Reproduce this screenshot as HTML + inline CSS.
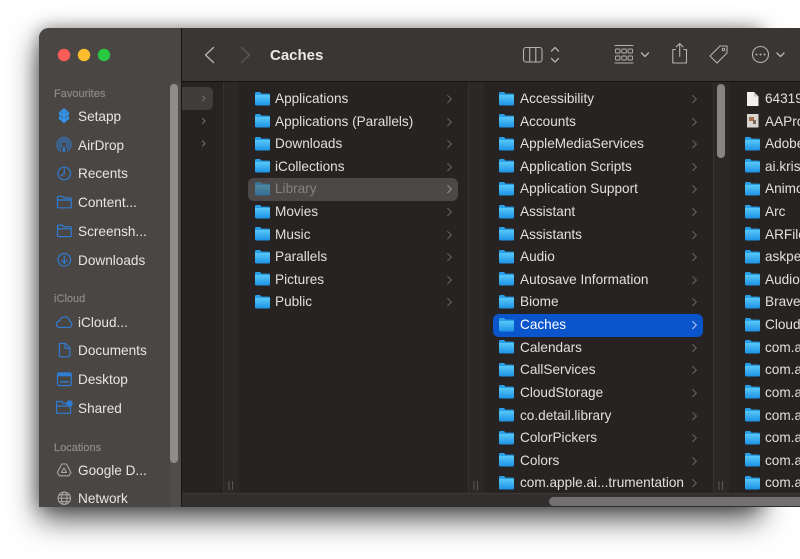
<!DOCTYPE html>
<html><head><meta charset="utf-8"><title>Finder</title>
<style>
html,body{margin:0;padding:0;background:#fff}
#root{position:relative;width:800px;height:559px;overflow:hidden;background:#fff;font-family:"Liberation Sans",sans-serif;filter:blur(.35px)}
#shadow{position:absolute;left:39px;top:28px;width:722px;height:479px;box-shadow:0 12px 30px rgba(0,0,0,.68),0 0 16px rgba(0,0,0,.32);border-radius:10px 0 0 0}
#win{position:absolute;left:39px;top:28px;width:761px;height:479px;overflow:hidden;background:#262322;border-top-left-radius:10px}
.a{position:absolute}
#side{left:0;top:0;width:142px;height:479px;background:#4a4644;border-right:1px solid #161414}
#bar{left:143px;top:0;width:618px;height:53px;background:#3a3634;border-bottom:1px solid #141212}
.g{position:absolute;top:54px;width:15px;height:411px;background:#2b2827;border-left:1px solid #353231}
#hb{left:143px;top:465px;width:618px;height:14px;background:#312e2d;border-top:1px solid #3c3938}
.sl{position:absolute;left:54px;font-size:11px;font-weight:400;color:#8d8987;line-height:14px;white-space:nowrap;margin-top:.5px;-webkit-text-stroke:.2px #8d8987}
.si{position:absolute;left:78px;font-size:13.6px;color:#e8e5e3;line-height:18px;white-space:nowrap;margin-top:1px}
.col{position:absolute;top:87px}
.r{position:relative;height:22.62px;line-height:22.62px;font-size:13.6px;color:#e2dfdd;white-space:nowrap}
.r svg{position:absolute;left:0;top:4.500px;width:15px;height:14px}
.r span{position:absolute;left:20px;top:1px}
.r i{position:absolute;top:9px;width:4.500px;height:4.500px;border-top:1px solid #686462;border-right:1px solid #686462;transform:rotate(45deg)}
.c1 .r i{left:190px}.c2 .r i{left:191px}
</style></head>
<body><div id="root">
<div id="shadow"></div>
<div id="win">
<div class="a" id="side"></div>
<div class="a" id="bar"></div>
<div class="a" style="left:131px;top:54px;width:11px;height:425px;background:#504c4a"></div>
<div class="g" style="left:184px"></div>
<div class="g" style="left:429px"></div>
<div class="g" style="left:674px"></div>
<div class="a" id="hb"></div>
<div class="a" style="left:143px;top:59px;width:31px;height:23px;background:#403d3c;border-radius:0 5px 5px 0"></div>
<div class="a" style="left:209px;top:150px;width:210px;height:22.5px;background:#4b4847;border-radius:6px"></div>
<div class="a" style="left:454px;top:286px;width:210px;height:22.5px;background:#0a55cc;border-radius:6px"></div>
<div class="a" style="left:131px;top:56px;width:8px;height:379px;background:#8f8c8a;border-radius:4px"></div>
<div class="a" style="left:678px;top:56px;width:8px;height:74px;background:#878483;border-radius:4px"></div>
<div class="a" style="left:510px;top:469px;width:260px;height:9px;background:#727070;border-radius:5px 0 0 5px"></div>
</div>

<div class="sl" style="top:86px">Favourites</div>
<div class="si" style="top:106.500px">Setapp</div>
<div class="si" style="top:135.500px">AirDrop</div>
<div class="si" style="top:164px">Recents</div>
<div class="si" style="top:193px">Content...</div>
<div class="si" style="top:221.500px">Screensh...</div>
<div class="si" style="top:250.500px">Downloads</div>
<div class="sl" style="top:291px">iCloud</div>
<div class="si" style="top:312.500px">iCloud...</div>
<div class="si" style="top:341px">Documents</div>
<div class="si" style="top:370px">Desktop</div>
<div class="si" style="top:398.500px">Shared</div>
<div class="sl" style="top:440px">Locations</div>
<div class="si" style="top:460.500px">Google D...</div>
<div class="si" style="top:489px">Network</div>

<div class="a" style="left:270px;top:46px;font-size:15px;font-weight:700;color:#ebe8e6;line-height:19px">Caches</div>

<svg width="0" height="0" style="position:absolute"><defs>
<linearGradient id="fg" x1="0" y1="0" x2="0" y2="1"><stop offset="0" stop-color="#58c8f8"/><stop offset="1" stop-color="#1c92e4"/></linearGradient>
<symbol id="f" viewBox="0 0 15 14"><path d="M0 3.500V1.300C0 .6 .5 0 1.200 0H5L6.500 1.600H13.800C14.500 1.600 15 2.200 15 3V3.500Z" fill="#2a9fe8"/><path d="M0 3H15V12.300C15 13 14.500 13.500 13.800 13.500H1.200C.5 13.500 0 13 0 12.300Z" fill="url(#fg)"/></symbol>
</defs></svg>

<div class="col c1" style="left:255px;width:205px;top:87px">
<div class="r"><svg><use href="#f"/></svg><span>Applications</span><i></i></div>
<div class="r"><svg><use href="#f"/></svg><span>Applications (Parallels)</span><i></i></div>
<div class="r"><svg><use href="#f"/></svg><span>Downloads</span><i></i></div>
<div class="r"><svg><use href="#f"/></svg><span>iCollections</span><i></i></div>
<div class="r"><svg style="opacity:.5"><use href="#f"/></svg><span style="color:#87827f">Library</span><i style="border-color:#989492"></i></div>
<div class="r"><svg><use href="#f"/></svg><span>Movies</span><i></i></div>
<div class="r"><svg><use href="#f"/></svg><span>Music</span><i></i></div>
<div class="r"><svg><use href="#f"/></svg><span>Parallels</span><i></i></div>
<div class="r"><svg><use href="#f"/></svg><span>Pictures</span><i></i></div>
<div class="r"><svg><use href="#f"/></svg><span>Public</span><i></i></div>
</div>

<div class="col c2" style="left:499px;width:205px;top:87px">
<div class="r"><svg><use href="#f"/></svg><span style="left:21px">Accessibility</span><i></i></div>
<div class="r"><svg><use href="#f"/></svg><span style="left:21px">Accounts</span><i></i></div>
<div class="r"><svg><use href="#f"/></svg><span style="left:21px">AppleMediaServices</span><i></i></div>
<div class="r"><svg><use href="#f"/></svg><span style="left:21px">Application Scripts</span><i></i></div>
<div class="r"><svg><use href="#f"/></svg><span style="left:21px">Application Support</span><i></i></div>
<div class="r"><svg><use href="#f"/></svg><span style="left:21px">Assistant</span><i></i></div>
<div class="r"><svg><use href="#f"/></svg><span style="left:21px">Assistants</span><i></i></div>
<div class="r"><svg><use href="#f"/></svg><span style="left:21px">Audio</span><i></i></div>
<div class="r"><svg><use href="#f"/></svg><span style="left:21px">Autosave Information</span><i></i></div>
<div class="r"><svg><use href="#f"/></svg><span style="left:21px">Biome</span><i></i></div>
<div class="r"><svg><use href="#f"/></svg><span style="left:21px;color:#fff">Caches</span><i style="border-color:#b9cdf0"></i></div>
<div class="r"><svg><use href="#f"/></svg><span style="left:21px">Calendars</span><i></i></div>
<div class="r"><svg><use href="#f"/></svg><span style="left:21px">CallServices</span><i></i></div>
<div class="r"><svg><use href="#f"/></svg><span style="left:21px">CloudStorage</span><i></i></div>
<div class="r"><svg><use href="#f"/></svg><span style="left:21px">co.detail.library</span><i></i></div>
<div class="r"><svg><use href="#f"/></svg><span style="left:21px">ColorPickers</span><i></i></div>
<div class="r"><svg><use href="#f"/></svg><span style="left:21px">Colors</span><i></i></div>
<div class="r"><svg><use href="#f"/></svg><span style="left:21px">com.apple.ai...trumentation</span><i></i></div>
</div>

<div class="col c3" style="left:745px;width:55px;overflow:hidden;top:87px;height:405px">
<div class="r"><svg viewBox="0 0 15 14"><path d="M2 0H9L13.500 4.500V14H2Z" fill="#f1f0ef"/><path d="M9 0V4.500H13.500Z" fill="#c9c7c5"/></svg><span>64319</span></div>
<div class="r"><svg viewBox="0 0 15 14"><rect x="2" y="0" width="11.500" height="13.500" fill="#d8d4cf"/><rect x="4" y="3" width="5" height="4" fill="#a5704e"/><rect x="8" y="6" width="3" height="4" fill="#7b6a60"/></svg><span>AAPro</span></div>
<div class="r"><svg><use href="#f"/></svg><span>Adobe</span></div>
<div class="r"><svg><use href="#f"/></svg><span>ai.kris</span></div>
<div class="r"><svg><use href="#f"/></svg><span>Animo</span></div>
<div class="r"><svg><use href="#f"/></svg><span>Arc</span></div>
<div class="r"><svg><use href="#f"/></svg><span>ARFile</span></div>
<div class="r"><svg><use href="#f"/></svg><span>askpe</span></div>
<div class="r"><svg><use href="#f"/></svg><span>Audio</span></div>
<div class="r"><svg><use href="#f"/></svg><span>Brave</span></div>
<div class="r"><svg><use href="#f"/></svg><span>Cloud</span></div>
<div class="r"><svg><use href="#f"/></svg><span>com.a</span></div>
<div class="r"><svg><use href="#f"/></svg><span>com.a</span></div>
<div class="r"><svg><use href="#f"/></svg><span>com.a</span></div>
<div class="r"><svg><use href="#f"/></svg><span>com.a</span></div>
<div class="r"><svg><use href="#f"/></svg><span>com.a</span></div>
<div class="r"><svg><use href="#f"/></svg><span>com.a</span></div>
<div class="r"><svg><use href="#f"/></svg><span>com.a</span></div>
</div>

<svg class="a" style="left:0;top:0" width="800" height="559" viewBox="0 0 800 559" fill="none">
<circle cx="64" cy="55" r="6.200" fill="#fc5c57"/><circle cx="84" cy="55" r="6.200" fill="#fdbc2e"/><circle cx="104" cy="55" r="6.200" fill="#28c840"/>

<g stroke="#b5b2b0" stroke-width="1.400" stroke-linecap="round" stroke-linejoin="round">
<path d="M213.500 47.500L205.500 55L213.500 62.500"/>
<path d="M241.500 47.500L249.500 55L241.500 62.500" stroke="#5a5755"/>
<rect x="523.500" y="47.500" width="18.500" height="14.500" rx="2.500" stroke-width="1.100"/>
<path d="M529.700 47.500V62M535.800 47.500V62" stroke-width="1.100"/>
<path d="M551.500 51L555 47.500L558.500 51M551.500 58.500L555 62L558.500 58.500" stroke-width="1.300"/>
<path d="M615 45.500H633M615 63H633" stroke-width="1"/>
<rect x="615.500" y="49" width="4.500" height="4" rx=".8" stroke-width=".9"/><rect x="621.800" y="49" width="4.500" height="4" rx=".8" stroke-width=".9"/><rect x="628" y="49" width="4.500" height="4" rx=".8" stroke-width=".9"/>
<rect x="615.500" y="56" width="4.500" height="4" rx=".8" stroke-width=".9"/><rect x="621.800" y="56" width="4.500" height="4" rx=".8" stroke-width=".9"/><rect x="628" y="56" width="4.500" height="4" rx=".8" stroke-width=".9"/>
<path d="M641.500 53L645 56.500L648.500 53" stroke-width="1.400"/>
<path d="M675.500 49.500H672.800V63H686.500V49.500H683.800" stroke-width="1.100"/>
<path d="M679.700 56.500V43.800M676.300 46.800L679.700 43.500L683 46.800" stroke-width="1.100"/>
<path d="M710 56.500L720 46.500H727V53.500L717 63.500Z" stroke-width="1.100" transform="translate(0 -.5)"/>
<circle cx="723.500" cy="49.500" r="1.200" stroke-width="1"/>
<circle cx="760.500" cy="54.500" r="8" stroke-width="1.100"/>
<path d="M777 53L780.500 56.500L784 53" stroke-width="1.400"/>
</g>
<g fill="#b5b2b0"><circle cx="756.500" cy="54.500" r="1"/><circle cx="760.500" cy="54.500" r="1"/><circle cx="764.500" cy="54.500" r="1"/></g>

<g stroke="#74716f" stroke-width="1" stroke-linecap="round" stroke-linejoin="round">
<path d="M202.500 96L205 98.500L202.500 101M202.500 118.500L205 121L202.500 123.500M202.500 141L205 143.500L202.500 146"/>
</g>
<g stroke="#5c5957" stroke-width="1"><path d="M229 481V490M232.500 481V490M474 481V490M477.500 481V490M719 481V490M722.500 481V490"/></g>

<g fill="#3591e6">
<path d="M64 108L67.500 111L64 114L60.500 111Z"/><path d="M64 112.500L67.500 115.500L64 118.500L60.500 115.500Z" transform="translate(0 -.3)"/><path d="M64 117L67.500 120L64 123.500L60.500 120Z"/>
<path d="M60 111L62.800 113.500L60 116L58.500 113.500Z"/><path d="M68 111L69.500 113.500L68 116L65.200 113.500Z"/>
<path d="M60 115.500L62.800 118L60 120.500L58.500 118Z"/><path d="M68 115.500L69.500 118L68 120.500L65.200 118Z"/>
</g>
<g stroke="#2f7cd2" stroke-width="1.200" stroke-linecap="round" stroke-linejoin="round">
<path d="M60.500 151C57.500 149.500 57 146.800 57 144.500A7 7 0 0 1 71 144.500C71 146.800 70 149.500 67.500 151" stroke-width="1"/>
<path d="M61 148.500C59.500 147.500 59 146 59 144.500A5 5 0 0 1 69 144.500C69 146 68.500 147.500 67 148.500" stroke-width="1"/>
<path d="M62 146.500C61.300 146 61 145.200 61 144.500A3 3 0 0 1 67 144.500C67 145.200 66.700 146 66 146.500" stroke-width="1"/>
<path d="M62.800 151.500L64 146L65.200 151.500Z" fill="#2f7cd2" stroke-width=".6"/>
<circle cx="64.200" cy="173.500" r="6.300"/><path d="M64.300 169V173.800L61 175.500"/>
<path d="M57.500 199.500V197.500C57.500 196.800 58 196.300 58.700 196.300H62.500L64 198H70C70.800 198 71.300 198.500 71.300 199.200V206.500C71.300 207.300 70.800 207.800 70 207.800H58.700C58 207.800 57.500 207.300 57.500 206.500ZM57.500 200H71.300"/>
<path d="M57.500 228.300V226.300C57.500 225.600 58 225.100 58.700 225.100H62.500L64 226.800H70C70.800 226.800 71.300 227.300 71.300 228V235.300C71.300 236.100 70.800 236.600 70 236.600H58.700C58 236.600 57.500 236.100 57.500 235.300ZM57.500 228.800H71.300"/>
<circle cx="64.300" cy="259.800" r="6.300"/><path d="M64.300 256V263M61.700 260.500L64.300 263.200L67 260.500"/>
<path d="M60 327.500C57.500 327.500 56.300 325.800 56.300 324.200C56.300 322.300 57.800 321 59.500 321C60.300 318.200 62.500 316.800 64.700 316.800C67.500 316.800 69.500 319 69.800 321.500C71.200 322 71.800 323.200 71.800 324.500C71.800 326.200 70.500 327.500 68.800 327.500Z"/>
<path d="M60 343.500H65.500L69.800 347.800V355.200C69.800 356.200 69.200 356.800 68.200 356.800H60.900C60 356.800 59.400 356.200 59.400 355.200V344.500C59.400 344 59.500 343.500 60 343.500ZM65 343.800V348.300H69.600"/>
<rect x="57.500" y="372.800" width="13.800" height="12.800" rx="1.800"/>
<path d="M60.500 381.800H68.300" stroke-width="1.400"/>
<path d="M57 401.500H62L63.500 403.500H66M56.500 401.500V413.300H70.500V407M56.500 406H70"/>
</g>
<rect x="57.500" y="372.800" width="13.800" height="3.500" fill="#2f7cd2"/>
<circle cx="69.500" cy="403.500" r="3.200" fill="#2f7cd2"/>
<g stroke="#a8a5a3" stroke-width="1.100" stroke-linejoin="round" stroke-linecap="round">
<path d="M61.800 464L66.500 464L71 472.500L69 475.800H59.500L57.300 472.500Z"/>
<path d="M64 468L66.500 472.500H61.500Z"/>
<circle cx="64.300" cy="498.200" r="6.200"/><ellipse cx="64.300" cy="498.200" rx="2.800" ry="6.200"/><path d="M58.200 498.200H70.400M59.200 494.800H69.400M59.200 501.600H69.400"/>
</g>
</svg>
</div></body></html>
